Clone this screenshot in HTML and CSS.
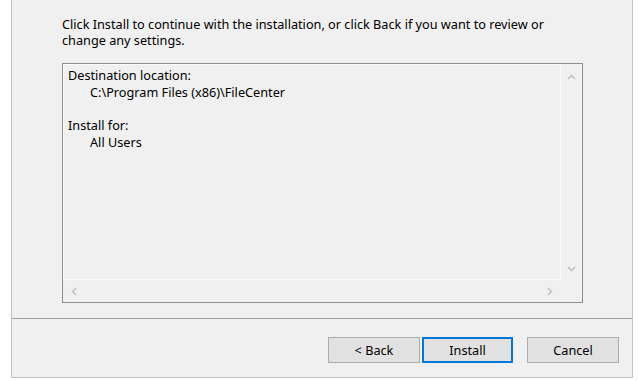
FILE: index.html
```html
<!DOCTYPE html>
<html lang="en">
<head>
    <meta charset="UTF-8">
    <title>Ready to Install</title>
    <link rel="stylesheet" href="styles.css">
</head>
<body>
<div class="window">
    <div class="page">
        <p class="intro">Click Install to continue with the installation, or click Back if you want to review or change any settings.</p>

        <div class="memo">
            <div class="memo-text">
                <div>Destination location:</div>
                <div class="indent">C:\Program Files (x86)\FileCenter</div>
                <div class="blank"></div>
                <div>Install for:</div>
                <div class="indent">All Users</div>
            </div>
            <div class="vscroll">
                <svg width="9" height="6" viewBox="0 0 9 6"><path d="M1 5 L4.5 1.5 L8 5" fill="none" stroke="#c2c2c2" stroke-width="1.6"/></svg>
                <svg width="9" height="6" viewBox="0 0 9 6"><path d="M1 1 L4.5 4.5 L8 1" fill="none" stroke="#c2c2c2" stroke-width="1.6"/></svg>
            </div>
            <div class="hscroll">
                <svg width="6" height="9" viewBox="0 0 6 9"><path d="M5 1 L1.5 4.5 L5 8" fill="none" stroke="#c2c2c2" stroke-width="1.6"/></svg>
                <svg width="6" height="9" viewBox="0 0 6 9"><path d="M1 1 L4.5 4.5 L1 8" fill="none" stroke="#c2c2c2" stroke-width="1.6"/></svg>
            </div>
            <div class="corner"></div>
        </div>
    </div>

    <div class="buttons">
        <button class="btn">&lt; Back</button>
        <button class="btn default">Install</button>
        <button class="btn cancel">Cancel</button>
    </div>
</div>
</body>
</html>
```

FILE: styles.css
```css
/* Wizard page, Windows 10 look */
body {
    margin: 0;
    background-color: #ffffff;
    font-family: 'Noto Sans', 'Open Sans', sans-serif;
    font-size: 12.7px;
    color: #000000;
}

.window {
    margin-left: 11px;
    width: 620px;
    height: 377px;
    background-color: #f0f0f0;
    border: 1px solid #c4c4c4;
    border-top: none;
    display: flex;
    flex-direction: column;
}

.page {
    height: 319px;
    padding: 16px 0 0 50px;
    box-sizing: border-box;
    border-bottom: 1px solid #a0a0a0;
}

.intro {
    margin: 0 0 15px 0;
    width: 520px;
    line-height: 16px;
}

.memo {
    width: 521px;
    height: 240px;
    box-sizing: border-box;
    border: 1px solid #8f8f8f;
    display: grid;
    grid-template-columns: 1fr 21px;
    grid-template-rows: 1fr 22px;
}

.memo-text {
    border: 1px solid #fbfbfb;
    padding: 2px 4px;
    line-height: 16.7px;
}

.indent {
    padding-left: 22px;
}

.blank {
    height: 16.7px;
}

.vscroll {
    display: flex;
    flex-direction: column;
    justify-content: space-between;
    align-items: center;
    padding: 10px 0 8px 0;
}

.hscroll {
    display: flex;
    justify-content: space-between;
    align-items: center;
    padding: 0 8px 0 8px;
}

.buttons {
    flex: 1;
    display: flex;
    align-items: center;
    padding: 0 13px 0 316px;
}

.btn {
    width: 92px;
    height: 26px;
    margin-top: 3px;
    background-color: #e1e1e1;
    border: 1px solid #adadad;
    font-family: inherit;
    font-size: 12.7px;
    color: #000000;
    padding: 0;
}

.btn.default {
    width: 91px;
    margin-left: 2px;
    border: 2px solid #0078d7;
}

.btn.cancel {
    margin-left: auto;
}
```
